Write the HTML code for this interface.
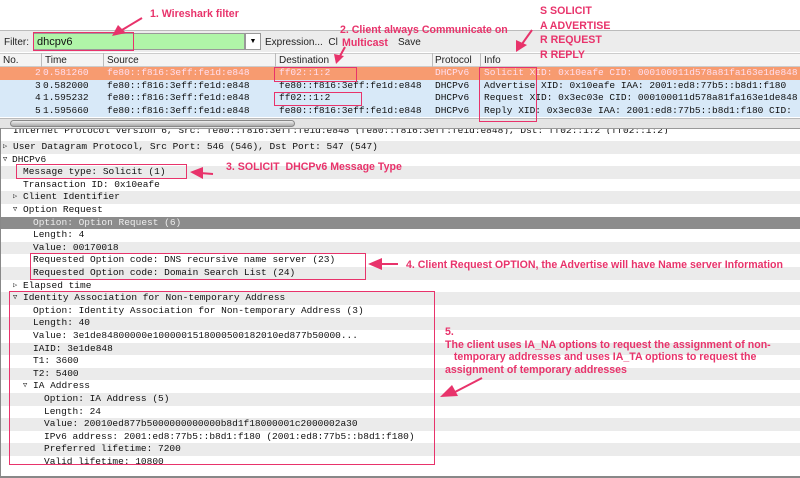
<!DOCTYPE html>
<html><head><meta charset="utf-8"><style>
*{margin:0;padding:0;box-sizing:border-box}
body{width:800px;height:478px;position:relative;background:#fff;overflow:hidden;font-family:"Liberation Sans",sans-serif}
.m{font-family:"Liberation Mono",monospace;font-size:9.5px;white-space:pre;color:#111}
.a{position:absolute;color:#e8336b;font-weight:bold;font-size:10.6px;white-space:nowrap;font-family:"Liberation Sans",sans-serif}
.box{position:absolute;border:1.5px solid #e8336b}
.ab{position:absolute}
.row{position:absolute;left:0;width:800px;height:12.6px;line-height:12.6px}
.row span{position:absolute;top:0}
.t{position:absolute;font-size:7px;top:0}
</style></head><body>
<div class="ab" style="left:0;top:30px;width:800px;height:22px;background:#ececec;border-top:1px solid #bbb"></div>
<div class="ab" style="left:4px;top:37px;font-size:10px;color:#222">Filter:</div>
<div class="ab" style="left:33px;top:33px;width:212px;height:17px;background:#b0f5a8;border:1px solid #999"></div>
<div class="ab" style="left:37px;top:36px;font-size:11px;color:#111">dhcpv6</div>
<div class="ab" style="left:245px;top:33px;width:16px;height:17px;background:#fff;border:1px solid #999;font-size:7px;text-align:center;line-height:16px">▼</div>
<div class="ab" style="left:265px;top:37px;font-size:10px;color:#222">Expression...&nbsp;&nbsp;Cl</div>
<div class="ab" style="left:398px;top:37px;font-size:10px;color:#222">Save</div>
<div class="ab" style="left:0;top:53px;width:800px;height:14px;background:#f4f4f4;border-top:1px solid #ccc;border-bottom:1px solid #ccc;font-size:10px;color:#222">
<span class="ab" style="left:3px;top:1px">No.</span>
<span class="ab" style="left:41px;top:-1px;height:14px;border-left:1px solid #bbb"></span><span class="ab" style="left:45px;top:1px">Time</span>
<span class="ab" style="left:103px;top:-1px;height:14px;border-left:1px solid #bbb"></span><span class="ab" style="left:107px;top:1px">Source</span>
<span class="ab" style="left:275px;top:-1px;height:14px;border-left:1px solid #bbb"></span><span class="ab" style="left:279px;top:1px">Destination</span>
<span class="ab" style="left:432px;top:-1px;height:14px;border-left:1px solid #bbb"></span><span class="ab" style="left:435px;top:1px">Protocol</span>
<span class="ab" style="left:480px;top:-1px;height:14px;border-left:1px solid #bbb"></span><span class="ab" style="left:484px;top:1px">Info</span>
</div>
<div class="m">
<div class="row" style="top:67px;background:#f79b70;color:#fde"><span style="left:35px">2</span><span style="left:43px">0.581260</span><span style="left:107px">fe80::f816:3eff:fe1d:e848</span><span style="left:279px">ff02::1:2</span><span style="left:435px">DHCPv6</span><span style="left:484px">Solicit XID: 0x10eafe CID: 000100011d578a81fa163e1de848</span></div>
<div class="row" style="top:79.6px;background:#d8e9f8"><span style="left:35px">3</span><span style="left:43px">0.582000</span><span style="left:107px">fe80::f816:3eff:fe1d:e848</span><span style="left:279px">fe80::f816:3eff:fe1d:e848</span><span style="left:435px">DHCPv6</span><span style="left:484px">Advertise XID: 0x10eafe IAA: 2001:ed8:77b5::b8d1:f180</span></div>
<div class="row" style="top:92.2px;background:#d8e9f8"><span style="left:35px">4</span><span style="left:43px">1.595232</span><span style="left:107px">fe80::f816:3eff:fe1d:e848</span><span style="left:279px">ff02::1:2</span><span style="left:435px">DHCPv6</span><span style="left:484px">Request XID: 0x3ec03e CID: 000100011d578a81fa163e1de848</span></div>
<div class="row" style="top:104.8px;background:#d8e9f8"><span style="left:35px">5</span><span style="left:43px">1.595660</span><span style="left:107px">fe80::f816:3eff:fe1d:e848</span><span style="left:279px">fe80::f816:3eff:fe1d:e848</span><span style="left:435px">DHCPv6</span><span style="left:484px">Reply XID: 0x3ec03e IAA: 2001:ed8:77b5::b8d1:f180 CID:</span></div>
</div>
<div class="ab" style="left:0;top:118px;width:800px;height:10px;background:#e4e4e4;border-top:1px solid #bbb"></div>
<div class="ab" style="left:10px;top:120px;width:285px;height:7px;background:linear-gradient(#eee,#aaa);border-radius:4px;border:1px solid #888"></div>
<div class="ab" style="left:0;top:128px;width:800px;height:1px;background:#999"></div>
<div class="m" style="position:absolute;left:0;top:0">
<div class="row" style="top:129px;height:5px;overflow:hidden;line-height:3px"><span style="left:13px">Internet Protocol Version 6, Src: fe80::f816:3eff:fe1d:e848 (fe80::f816:3eff:fe1d:e848), Dst: ff02::1:2 (ff02::1:2)</span></div>
<div class="row" style="top:141px;background:#ebebeb"><i class="t" style="left:3px;font-style:normal">▷</i><span style="left:13px">User Datagram Protocol, Src Port: 546 (546), Dst Port: 547 (547)</span></div>
<div class="row" style="top:153.6px"><i class="t" style="left:3px;font-style:normal">▽</i><span style="left:12px">DHCPv6</span></div>
<div class="row" style="top:166.2px;background:#ebebeb"><span style="left:23px">Message type: Solicit (1)</span></div>
<div class="row" style="top:178.8px"><span style="left:23px">Transaction ID: 0x10eafe</span></div>
<div class="row" style="top:191.4px;background:#ebebeb"><i class="t" style="left:13px;font-style:normal">▷</i><span style="left:23px">Client Identifier</span></div>
<div class="row" style="top:204px"><i class="t" style="left:13px;font-style:normal">▽</i><span style="left:23px">Option Request</span></div>
<div class="row" style="top:216.6px;background:#8c8c8c;color:#eee"><span style="left:33px">Option: Option Request (6)</span></div>
<div class="row" style="top:229.2px"><span style="left:33px">Length: 4</span></div>
<div class="row" style="top:241.8px;background:#ebebeb"><span style="left:33px">Value: 00170018</span></div>
<div class="row" style="top:254.4px"><span style="left:33px">Requested Option code: DNS recursive name server (23)</span></div>
<div class="row" style="top:267px;background:#ebebeb"><span style="left:33px">Requested Option code: Domain Search List (24)</span></div>
<div class="row" style="top:279.6px"><i class="t" style="left:13px;font-style:normal">▷</i><span style="left:23px">Elapsed time</span></div>
<div class="row" style="top:292.2px;background:#ebebeb"><i class="t" style="left:13px;font-style:normal">▽</i><span style="left:23px">Identity Association for Non-temporary Address</span></div>
<div class="row" style="top:304.8px"><span style="left:33px">Option: Identity Association for Non-temporary Address (3)</span></div>
<div class="row" style="top:317.4px;background:#ebebeb"><span style="left:33px">Length: 40</span></div>
<div class="row" style="top:330px"><span style="left:33px">Value: 3e1de84800000e1000001518000500182010ed877b50000...</span></div>
<div class="row" style="top:342.6px;background:#ebebeb"><span style="left:33px">IAID: 3e1de848</span></div>
<div class="row" style="top:355.2px"><span style="left:33px">T1: 3600</span></div>
<div class="row" style="top:367.8px;background:#ebebeb"><span style="left:33px">T2: 5400</span></div>
<div class="row" style="top:380.4px"><i class="t" style="left:23px;font-style:normal">▽</i><span style="left:33px">IA Address</span></div>
<div class="row" style="top:393px;background:#ebebeb"><span style="left:44px">Option: IA Address (5)</span></div>
<div class="row" style="top:405.6px"><span style="left:44px">Length: 24</span></div>
<div class="row" style="top:418.2px;background:#ebebeb"><span style="left:44px">Value: 20010ed877b5000000000000b8d1f18000001c2000002a30</span></div>
<div class="row" style="top:430.8px"><span style="left:44px">IPv6 address: 2001:ed8:77b5::b8d1:f180 (2001:ed8:77b5::b8d1:f180)</span></div>
<div class="row" style="top:443.4px;background:#ebebeb"><span style="left:44px">Preferred lifetime: 7200</span></div>
<div class="row" style="top:456px;height:9px;overflow:hidden"><span style="left:44px">Valid lifetime: 10800</span></div>
</div>
<div class="ab" style="left:0;top:128px;width:1px;height:348px;background:#888"></div>
<div class="ab" style="left:0;top:476px;width:800px;height:2px;background:#888"></div>
<div class="box" style="left:33px;top:32px;width:101px;height:19px"></div>
<div class="box" style="left:274px;top:67px;width:83px;height:15px"></div>
<div class="box" style="left:274px;top:92px;width:88px;height:14px"></div>
<div class="box" style="left:479px;top:67px;width:58px;height:55px"></div>
<div class="box" style="left:16px;top:164px;width:171px;height:15px"></div>
<div class="box" style="left:30px;top:253px;width:336px;height:27px"></div>
<div class="box" style="left:9px;top:291px;width:426px;height:174px"></div>
<div class="a" style="left:150px;top:8px">1. Wireshark filter</div>
<div class="a" style="left:340px;top:24px">2. Client always Communicate on</div>
<div class="a" style="left:342px;top:37px">Multicast</div>
<div class="a" style="left:540px;top:4px;line-height:14.5px">S SOLICIT<br>A ADVERTISE<br>R REQUEST<br>R REPLY</div>
<div class="a" style="left:226px;top:161px">3. SOLICIT&nbsp; DHCPv6 Message Type</div>
<div class="a" style="left:406px;top:259px">4. Client Request OPTION, the Advertise will have Name server Information</div>
<div class="a" style="left:445px;top:326px;line-height:12.5px">5.<br>The client uses IA_NA options to request the assignment of non-<br>&nbsp;&nbsp;&nbsp;temporary addresses and uses IA_TA options to request the<br>assignment of temporary addresses</div>
<svg class="ab" style="left:0;top:0" width="800" height="478">
<g stroke="#e8336b" fill="#e8336b" stroke-width="2">
<line x1="142" y1="18" x2="122" y2="30"/><polygon points="112,36 118,25 126,33" stroke="none"/>
<line x1="345" y1="47" x2="340" y2="56"/><polygon points="336,64 334,54 344,56" stroke="none"/>
<line x1="532" y1="30" x2="522" y2="44"/><polygon points="516,52 516,40 527,45" stroke="none"/>
<line x1="213" y1="174" x2="200" y2="173"/><polygon points="190,172 203,167 203,179" stroke="none"/>
<line x1="398" y1="264" x2="380" y2="264"/><polygon points="368,264 382,258 382,270" stroke="none"/>
<line x1="482" y1="378" x2="455" y2="392"/><polygon points="440,397 452,385 458,396" stroke="none"/>
</g></svg>
</body></html>
